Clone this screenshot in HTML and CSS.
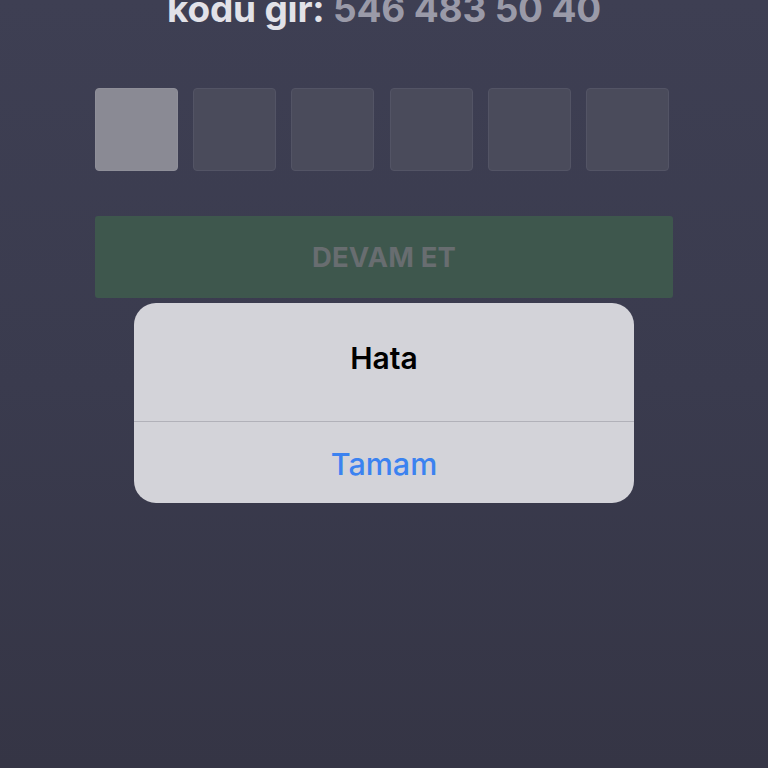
FILE: index.html
```html
<!DOCTYPE html>
<html lang="tr">
<head>
<meta charset="utf-8">
<link rel="stylesheet" href="styles.css">
</head>
<body>
<div class="screen">
  <h1 class="title">kodu gir: <span class="phone">546 483 50 40</span></h1>
  <div class="code-row">
    <div class="cell cell-active"></div>
    <div class="cell"></div>
    <div class="cell"></div>
    <div class="cell"></div>
    <div class="cell"></div>
    <div class="cell"></div>
  </div>
  <div class="btn">DEVAM ET</div>
</div>
<div class="alert">
  <div class="alert-title">Hata</div>
  <div class="alert-action">Tamam</div>
</div>
</body>
</html>
```
FILE: styles.css
```css
html, body {
  margin: 0;
  padding: 0;
  width: 768px;
  height: 768px;
  overflow: hidden;
}
body {
  background: linear-gradient(180deg, #3e3f53 0%, #3a3b4e 50%, #353545 100%);
  font-family: "Inter", "Liberation Sans", sans-serif;
  position: relative;
}
.screen {
  display: flex;
  flex-direction: column;
  align-items: center;
  padding: 0 95px;
}
.title {
  margin: -11px 0 0 0;
  height: 40px;
  line-height: 40px;
  font-size: 37px;
  font-weight: 700;
  color: #e2e2e8;
  letter-spacing: -0.2px;
  white-space: nowrap;
}
.phone {
  color: #9a9aa8;
}
.code-row {
  display: flex;
  gap: 15.2px;
  margin-top: 59px;
  align-self: flex-start;
}
.cell {
  width: 81px;
  height: 81px;
  border-radius: 4px;
  background: #4a4b5b;
  border: 1px solid #535465;
}
.cell-active {
  background: #8a8a94;
  border-color: #8f8f99;
}
.btn {
  margin-top: 45px;
  width: 578px;
  height: 82px;
  border-radius: 3px;
  background: #3e574d;
  color: #686d70;
  font-size: 27.5px;
  font-weight: 700;
  display: flex;
  align-items: center;
  justify-content: center;
  letter-spacing: 0.2px;
}
.alert {
  position: absolute;
  left: 134px;
  top: 303px;
  width: 500px;
  height: 200px;
  border-radius: 22px;
  background: #d3d3d9;
  display: flex;
  flex-direction: column;
  overflow: hidden;
}
.alert-title {
  height: 119px;
  display: flex;
  align-items: center;
  justify-content: center;
  font-size: 30px;
  font-weight: 600;
  color: #000;
  border-bottom: 1px solid #b1b1b9;
  padding-bottom: 9px;
  box-sizing: border-box;
}
.alert-action {
  flex: 1;
  display: flex;
  align-items: center;
  justify-content: center;
  font-size: 30.5px;
  font-weight: 500;
  color: #3b82f0;
  padding-top: 2px;
}
```
